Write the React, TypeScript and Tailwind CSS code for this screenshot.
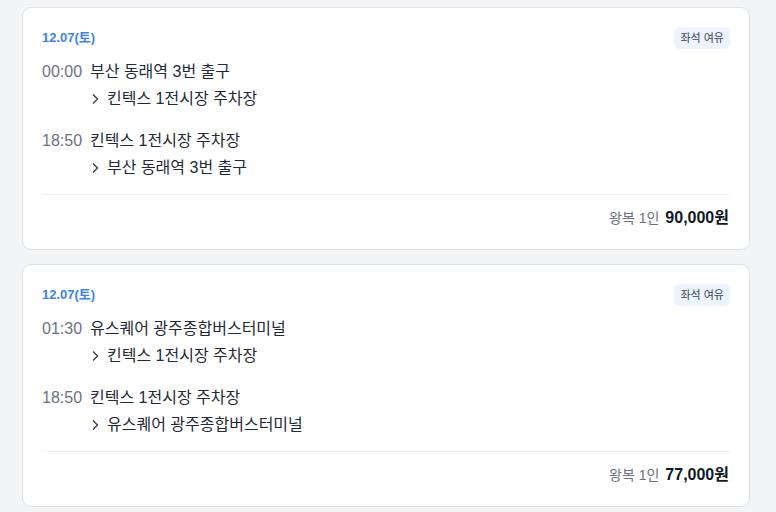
import React from "react";

interface Leg {
  time: string;
  from: string;
  to: string;
}

interface Trip {
  date: string;
  legs: Leg[];
  price: string;
}

const trips: Trip[] = [
  {
    date: "12.07(토)",
    legs: [
      { time: "00:00", from: "부산 동래역 3번 출구", to: "킨텍스 1전시장 주차장" },
      { time: "18:50", from: "킨텍스 1전시장 주차장", to: "부산 동래역 3번 출구" },
    ],
    price: "90,000원",
  },
  {
    date: "12.07(토)",
    legs: [
      { time: "01:30", from: "유스퀘어 광주종합버스터미널", to: "킨텍스 1전시장 주차장" },
      { time: "18:50", from: "킨텍스 1전시장 주차장", to: "유스퀘어 광주종합버스터미널" },
    ],
    price: "77,000원",
  },
];

function Chevron() {
  return (
    <svg width="9" height="12" viewBox="0 0 9 12" className="shrink-0">
      <path d="M2 1.5 L6.5 6 L2 10.5" fill="none" stroke="#374151" strokeWidth="1.4" />
    </svg>
  );
}

function TripCard({ trip }: { trip: Trip }) {
  return (
    <div className="bg-white border border-[#dfe1e5] rounded-[9px] px-[19px] pt-[19px] pb-[19px]">
      {/* Header */}
      <div className="flex items-center justify-between h-[22px]">
        <span className="text-[13px] font-bold text-[#3b82f6]">{trip.date}</span>
        <span className="h-[22px] px-[6px] flex items-center rounded-[5px] bg-[#eef4ff] text-[11px] text-[#374151]">
          좌석 여유
        </span>
      </div>

      {/* Legs */}
      <div className="mt-[11px] flex flex-col gap-[18px]">
        {trip.legs.map((leg, i) => (
          <div key={i} className="flex flex-col gap-[3px]">
            <div className="flex items-center h-[24px] text-[16px]">
              <span className="w-[48px] text-[#6b7280]">{leg.time}</span>
              <span className="text-[#1f2937]">{leg.from}</span>
            </div>
            <div className="flex items-center h-[24px] pl-[49px] gap-[7px] text-[16px] text-[#1f2937]">
              <Chevron />
              <span>{leg.to}</span>
            </div>
          </div>
        ))}
      </div>

      {/* Divider */}
      <div className="mt-[14px] border-t border-[#eeeff1]" />

      {/* Price */}
      <div className="mt-[11px] flex items-center justify-end gap-[6px] h-[24px] pr-px">
        <span className="text-[14px] text-[#6b7280]">왕복 1인</span>
        <span className="text-[16px] font-bold text-[#111827]">{trip.price}</span>
      </div>
    </div>
  );
}

export default function App() {
  return (
    <div
      className="min-h-[512px] w-[776px] bg-[#f3f4f6] pl-[22px] pr-[26px] pt-[7px] flex flex-col gap-[14px]"
      style={{ fontFamily: '"Liberation Sans", "Noto Sans CJK KR", sans-serif' }}
    >
      {trips.map((t, i) => (
        <TripCard key={i} trip={t} />
      ))}
    </div>
  );
}
